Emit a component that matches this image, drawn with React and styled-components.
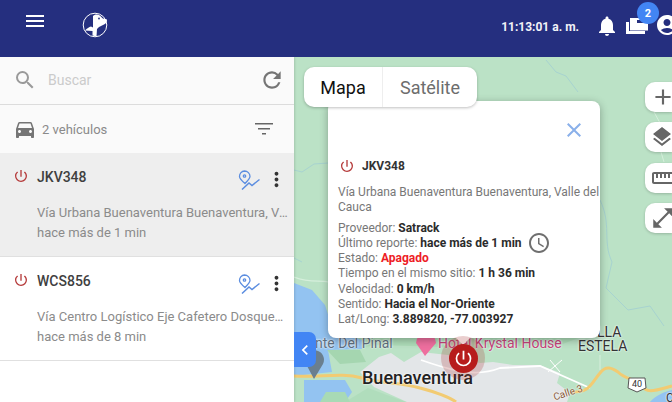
import React from 'react';
import styled, { createGlobalStyle } from 'styled-components';
import { MdNotifications, MdSearch, MdRefresh, MdDirectionsCar, MdMoreVert, MdPowerSettingsNew, MdClose, MdAdd, MdLayers, MdOutlineStraighten, MdOpenInFull, MdAccessTime, MdChevronLeft, MdAccountCircle } from 'react-icons/md';

const Global = createGlobalStyle`
  html, body { margin: 0; padding: 0; width: 672px; height: 402px; overflow: hidden; font-family: Roboto, "Liberation Sans", sans-serif; }
  #root { width: 672px; height: 402px; }
  * { box-sizing: border-box; }
  svg { display: block; flex: none; }
`;
const Page = styled.div`width:672px;height:402px;display:flex;flex-direction:column;overflow:hidden;`;
const Header = styled.header`height:57px;flex:none;background:#252f7f;display:flex;align-items:flex-start;color:#fff;position:relative;z-index:3;overflow:hidden;`;
const MenuBtn = styled.div`width:82px;padding:15px 0 0 26px;`;
const Logo = styled.svg`width:26px;height:26px;margin-top:12px;`;
const Spacer = styled.div`flex:1;`;
const Time = styled.span`font-size:12px;font-weight:700;margin-top:20px;color:#f2f3f8;margin-right:16px;white-space:nowrap;`;
const HeaderIcon = styled.div`margin-top:${p=>p.$t}px;width:${p=>p.$w}px;position:relative;flex:none;`;
const Badge = styled.span`position:absolute;top:-16px;left:11px;width:22px;height:22px;border-radius:50%;background:#4285f4;font-size:11px;font-weight:700;display:flex;align-items:center;justify-content:center;z-index:1;`;
const Body = styled.div`flex:1;display:flex;min-height:0;`;
const Side = styled.aside`width:294px;flex:none;background:#fff;display:flex;flex-direction:column;box-shadow:1px 0 2px rgba(0,0,0,.12);z-index:2;`;
const SearchRow = styled.div`height:48px;flex:none;background:#fafafa;border-bottom:1px solid #dcdcdc;display:flex;align-items:center;padding:0 9px 1px 13px;color:#9a9a9a;`;
const Placeholder = styled.span`margin-left:11px;flex:1;font-size:14px;color:#cbcbcb;`;
const CountRow = styled.div`height:48px;flex:none;background:#fafafa;display:flex;align-items:center;padding:0 21px 0 13px;color:#757575;`;
const CountText = styled.span`flex:1;margin-left:5px;font-size:13px;color:#8a8a8a;`;
const Item = styled.div`height:104px;flex:none;background:${p=>p.$active?'#eeeeee':'#fff'};border-bottom:1px solid #e0e0e0;padding:16px 6px 0 13px;`;
const ItemTop = styled.div`display:flex;align-items:center;height:16px;`;
const PowerSlot = styled.span`display:flex;margin-top:-2px;color:#b53a3a;`;
const Plate = styled.span`font-size:14px;color:#3f3f3f;margin-left:8px;flex:1;font-weight:500;`;
const RouteSlot = styled.span`display:flex;margin-top:6px;`;
const Kebab = styled.div`margin:4px 0 0 5px;width:23px;height:23px;color:#333;`;
const ItemText = styled.div`margin:${p=>p.$first?18:0}px 0 0 24px;font-size:13px;line-height:20px;color:#8b8b8b;white-space:nowrap;overflow:hidden;text-overflow:ellipsis;`;
const MapArea = styled.main`flex:1;position:relative;overflow:hidden;background:#bbe2c6;`;
const MapSvg = styled.svg`position:absolute;inset:0;width:378px;height:345px;`;
const TypeSwitch = styled.div`position:absolute;left:10px;top:10px;height:40px;width:173px;background:#fff;border-radius:10px;display:flex;box-shadow:0 1px 3px rgba(0,0,0,.25);z-index:2;`;
const TypeBtn = styled.div`font-size:18px;display:flex;align-items:center;justify-content:center;width:${p=>p.$w}px;color:${p=>p.$on?'#111':'#6d6d6d'};${p=>p.$on?'border-right:1px solid #eee;':''}`;
const Popup = styled.div`position:absolute;left:34px;top:44px;width:272px;height:237px;background:#fff;border-radius:8px;box-shadow:0 2px 8px rgba(0,0,0,.3);padding:17px 0 0 10px;z-index:1;
  &::after{content:"";position:absolute;left:128px;bottom:-7px;border:7px solid transparent;border-bottom:0;border-top-color:#fff;}`;
const CloseRow = styled.div`display:flex;justify-content:flex-end;height:24px;padding-right:14px;color:#8ab0ea;`;
const PopupTitle = styled.div`display:flex;align-items:center;font-size:12px;font-weight:700;color:#333;margin-top:16px;height:16px;`;
const PopupPower = styled.span`display:flex;color:#b53a3a;margin-left:1px;`;
const PopupPlate = styled.span`margin-left:7px;`;
const Address = styled.div`font-size:12px;line-height:15px;color:#777;margin:10.5px 0 6px;`;
const Line = styled.div`font-size:12px;line-height:15.33px;height:15.33px;color:#777;white-space:nowrap;`;
const B = styled.b`font-weight:700;color:${p=>p.$red?'#ee1c25':'#2b2b2b'};`;
const ClockWrap = styled.span`display:inline-flex;margin-left:5px;color:#6f6f6f;height:15px;align-items:center;vertical-align:top;`;
const Tools = styled.div`position:absolute;right:0;top:25px;display:flex;flex-direction:column;gap:10.3px;z-index:1;`;
const Tool = styled.div`width:27px;height:30px;background:#fff;border-radius:10px 0 0 10px;display:flex;align-items:center;padding-left:${p=>p.$p||5}px;color:#666;box-shadow:0 1px 3px rgba(0,0,0,.2);overflow:hidden;`;
const Collapse = styled.div`position:absolute;left:0;top:275px;width:22px;height:35px;background:#4285f4;border-radius:0 7px 7px 0;display:flex;align-items:center;justify-content:center;color:#fff;z-index:2;`;
const Label = styled.span`position:absolute;left:${p=>p.$x}px;top:${p=>p.$y}px;font-size:${p=>p.$s||13}px;font-weight:${p=>p.$w||400};color:${p=>p.$c||'#333'};white-space:nowrap;line-height:1;text-shadow:0 0 2px #fff,0 0 2px rgba(255,255,255,.8);${p=>p.$r?`transform:rotate(${p.$r}deg);`:''}`;
const Pulse = styled.div`position:absolute;left:147px;top:279px;width:44px;height:44px;border-radius:50%;background:rgba(170,60,60,.25);display:flex;align-items:center;justify-content:center;z-index:1;`;
const Marker = styled.div`width:29px;height:29px;border-radius:50%;background:#b71c1c;display:flex;align-items:center;justify-content:center;color:#fff;`;

const RouteIcon = () => (
  <svg width="22" height="20" viewBox="0 0 22 20" fill="none" stroke="#5b8de0" strokeWidth="1.3">
    <path d="M6.500 1a5.500 5.500 0 0 1 5.500 5.500c0 1.800-2 4-5 7-3.500-3-5.500-5.200-5.500-7A5.500 5.500 0 0 1 6.500 1z" />
    <circle cx="6.500" cy="6" r="1.200" />
    <path d="M4 19.500 L11 13 L14 15.500 L21.500 9.500" strokeWidth="1.500" />
  </svg>
);

const vehicles = [
  { plate: 'JKV348', addr: 'Vía Urbana Buenaventura Buenaventura, Valle del Cauca', ago: 'hace más de 1 min', active: true },
  { plate: 'WCS856', addr: 'Vía Centro Logístico Eje Cafetero Dosquebradas, Risaralda', ago: 'hace más de 8 min' },
];

export default function App() {
  return (
    <Page>
      <Global />
      <Header>
        <MenuBtn>
          <svg width="18" height="12" viewBox="0 0 18 12" fill="#fff"><path d="M0 0h18v2H0zM0 5h18v2H0zM0 10h18v2H0z" /></svg>
        </MenuBtn>
        <Logo viewBox="0 0 26 26">
          <circle cx="13" cy="13" r="11.800" fill="#252f7f" stroke="#fff" strokeWidth="1" />
          <path d="M11 4 C12 2.500 15 2 17 3 C19 4 20 6 21 6.500 L25 7.500 C25 10 24 11.500 22 12.500 L17 15 L15 17 L14.500 24.500 L10.500 23.500 L10.500 19 L3 18.500 C5 16.500 7 15 9 14.500 L11 15.500 Z" fill="#fff" />
          <circle cx="17" cy="6.500" r=".9" fill="#252f7f" />
        </Logo>
        <Spacer />
        <Time>11:13:01 a. m.</Time>
        <HeaderIcon $w={31} $t={14}><MdNotifications size={24} /></HeaderIcon>
        <HeaderIcon $w={29} $t={18}>
          <svg width="22" height="16" viewBox="0 0 22 16" fill="#fff"><path d="M0 4h3v9h16v3H0z" /><path d="M4 0h18v12.500H4z" /><path d="M11 2h7v3h-7z" fill="#252f7f" /></svg>
          <Badge>2</Badge>
        </HeaderIcon>
        <HeaderIcon $w={17} $t={13}><MdAccountCircle size={24} /></HeaderIcon>
      </Header>
      <Body>
        <Side>
          <SearchRow>
            <MdSearch size={24} />
            <Placeholder>Buscar</Placeholder>
            <MdRefresh size={26} color="#757575" />
          </SearchRow>
          <CountRow>
            <MdDirectionsCar size={24} />
            <CountText>2 vehículos</CountText>
            <svg width="18" height="12" viewBox="0 0 18 12" fill="#666"><path d="M0 0h18v1.500H0zM3 5h12v1.500H3zM7 10h4v1.500H7z" /></svg>
          </CountRow>
          {vehicles.map(v => (
            <Item key={v.plate} $active={v.active}>
              <ItemTop>
                <PowerSlot><MdPowerSettingsNew size={16} /></PowerSlot>
                <Plate>{v.plate}</Plate>
                <RouteSlot><RouteIcon /></RouteSlot>
                <Kebab><MdMoreVert size={23} /></Kebab>
              </ItemTop>
              <ItemText $first>{v.addr}</ItemText>
              <ItemText>{v.ago}</ItemText>
            </Item>
          ))}
        </Side>
        <MapArea>
          <MapSvg viewBox="294 57 378 345">
            <rect x="294" y="57" width="378" height="345" fill="#bbe2c6" />
            <path d="M294 330 H600 L560 345 L470 348 L380 345 L340 350 Z" fill="#aeddb9" />
            <path d="M294 283 L312 290 L325 305 L333 330 L362 340 L362 349 L328 350 L332 372 L294 376 Z" fill="#93c3f1" />
            <path d="M327 350 L360 350 L366 362 L340 364 Z" fill="#a5d6b0" />
            <path d="M304 380 L345 380 L352 392 L345 402 L304 402 Z" fill="#93c3f1" />
            <path d="M320 402 L326 392 L345 392 L350 402 Z" fill="#a8dab5" />
            <path d="M360 372 L379 357 L391 353 L404 362 L421 352 L448 355 L480 363 L493 362 L513 365 L540 365 L560 373 L557 383 L570 393 L567 402 L407 402 L374 387 Z" fill="#e3e6e8" />
            <path d="M345 402 L368 388 L406 402 Z" fill="#a8dab5" opacity=".6" />
            <path d="M294 277 C310 283 320 280 328 282" stroke="#d6efdc" strokeWidth="1.200" fill="none" />
            <path d="M421 360 C450 370 475 378 500 368 L540 366 L590 388" stroke="#fff" strokeWidth="1.800" fill="none" />
            <path d="M550 360 L560 372 M548 372 L562 360" stroke="#fff" strokeWidth="1" fill="none" />
            <path d="M600 355 V370" stroke="#d6efdc" strokeWidth="1" fill="none" />
            <path d="M294 376 C320 378 340 372 362 378 C385 384 400 382 420 388 C435 392 448 396 456 402" stroke="#f2cb72" strokeWidth="3" fill="none" />
            <path d="M572 392 C590 392 590 385 600 373 C606 365 612 368 618 372 C626 380 634 378 641 385 C647 394 654 391 672 386" stroke="#f2cb72" strokeWidth="3" fill="none" />
            <path d="M650 402 C656 395 664 392 672 390 V402 Z" fill="#93c3f1" />
            <path d="M294 170 L302 172 L314 164 L328 163 M546 60 L556 72 L566 76 L578 92 M600 200 C612 225 602 240 612 262 L606 288 L628 310 L650 306 L664 326 M294 258 L302 262" stroke="#a7d3d0" strokeWidth="1" fill="none" />
            <path d="M654 112 L660 123 M661 152 L664 162" stroke="#d6efdc" strokeWidth="1" fill="none" />
            <path d="M416 343 a10 10 0 0 1 20 0 L425 356 Z" fill="#ee6f9f" />
            <path d="M305 360 a9.500 9.500 0 1 1 18 4 L314 379 L306 364 Z" fill="#6a7f8f" />
            <path d="M629 378 H645 L646 388 L637 392 L628 388 Z" fill="#fff" stroke="#555" strokeWidth="1" />
          </MapSvg>
          <Label $x={21} $y={279} $s={14} $c="#5f7080">nte Del Pinal</Label>
          <Label $x={144} $y={279} $s={14} $c="#c4447a">Hotel Krystal House</Label>
          <Label $x={68} $y={312} $s={18} $w={500} $c="#222">Buenaventura</Label>
          <Label $x={303} $y={268} $s={14} $c="#333">LLA</Label>
          <Label $x={284} $y={282} $s={14} $c="#333">ESTELA</Label>
          <Label $x={338} $y={323} $s={9} $c="#333">40</Label>
          <Label $x={259} $y={331} $s={10} $c="#8a5a3a" $r={-18}>Calle 3</Label>
          <Label $x={372} $y={335} $s={12} $c="#333">C</Label>
          <TypeSwitch>
            <TypeBtn $on $w={79}>Mapa</TypeBtn>
            <TypeBtn $w={94}>Satélite</TypeBtn>
          </TypeSwitch>
          <Popup>
            <CloseRow><MdClose size={24} /></CloseRow>
            <PopupTitle><PopupPower><MdPowerSettingsNew size={16} /></PopupPower><PopupPlate>JKV348</PopupPlate></PopupTitle>
            <Address>Vía Urbana Buenaventura Buenaventura, Valle del Cauca</Address>
            <Line>Proveedor: <B>Satrack</B></Line>
            <Line>Último reporte: <B>hace más de 1 min</B><ClockWrap><MdAccessTime size={24} /></ClockWrap></Line>
            <Line>Estado: <B $red>Apagado</B></Line>
            <Line>Tiempo en el mismo sitio: <B>1 h 36 min</B></Line>
            <Line>Velocidad: <B>0 km/h</B></Line>
            <Line>Sentido: <B>Hacia el Nor-Oriente</B></Line>
            <Line>Lat/Long: <B>3.889820, -77.003927</B></Line>
          </Popup>
          <Tools>
            <Tool><MdAdd size={26} /></Tool>
            <Tool><MdLayers size={24} /></Tool>
            <Tool $p={6}><MdOutlineStraighten size={24} /></Tool>
            <Tool><MdOpenInFull size={26} /></Tool>
          </Tools>
          <Collapse><MdChevronLeft size={20} /></Collapse>
          <Pulse><Marker><MdPowerSettingsNew size={21} /></Marker></Pulse>
        </MapArea>
      </Body>
    </Page>
  );
}
